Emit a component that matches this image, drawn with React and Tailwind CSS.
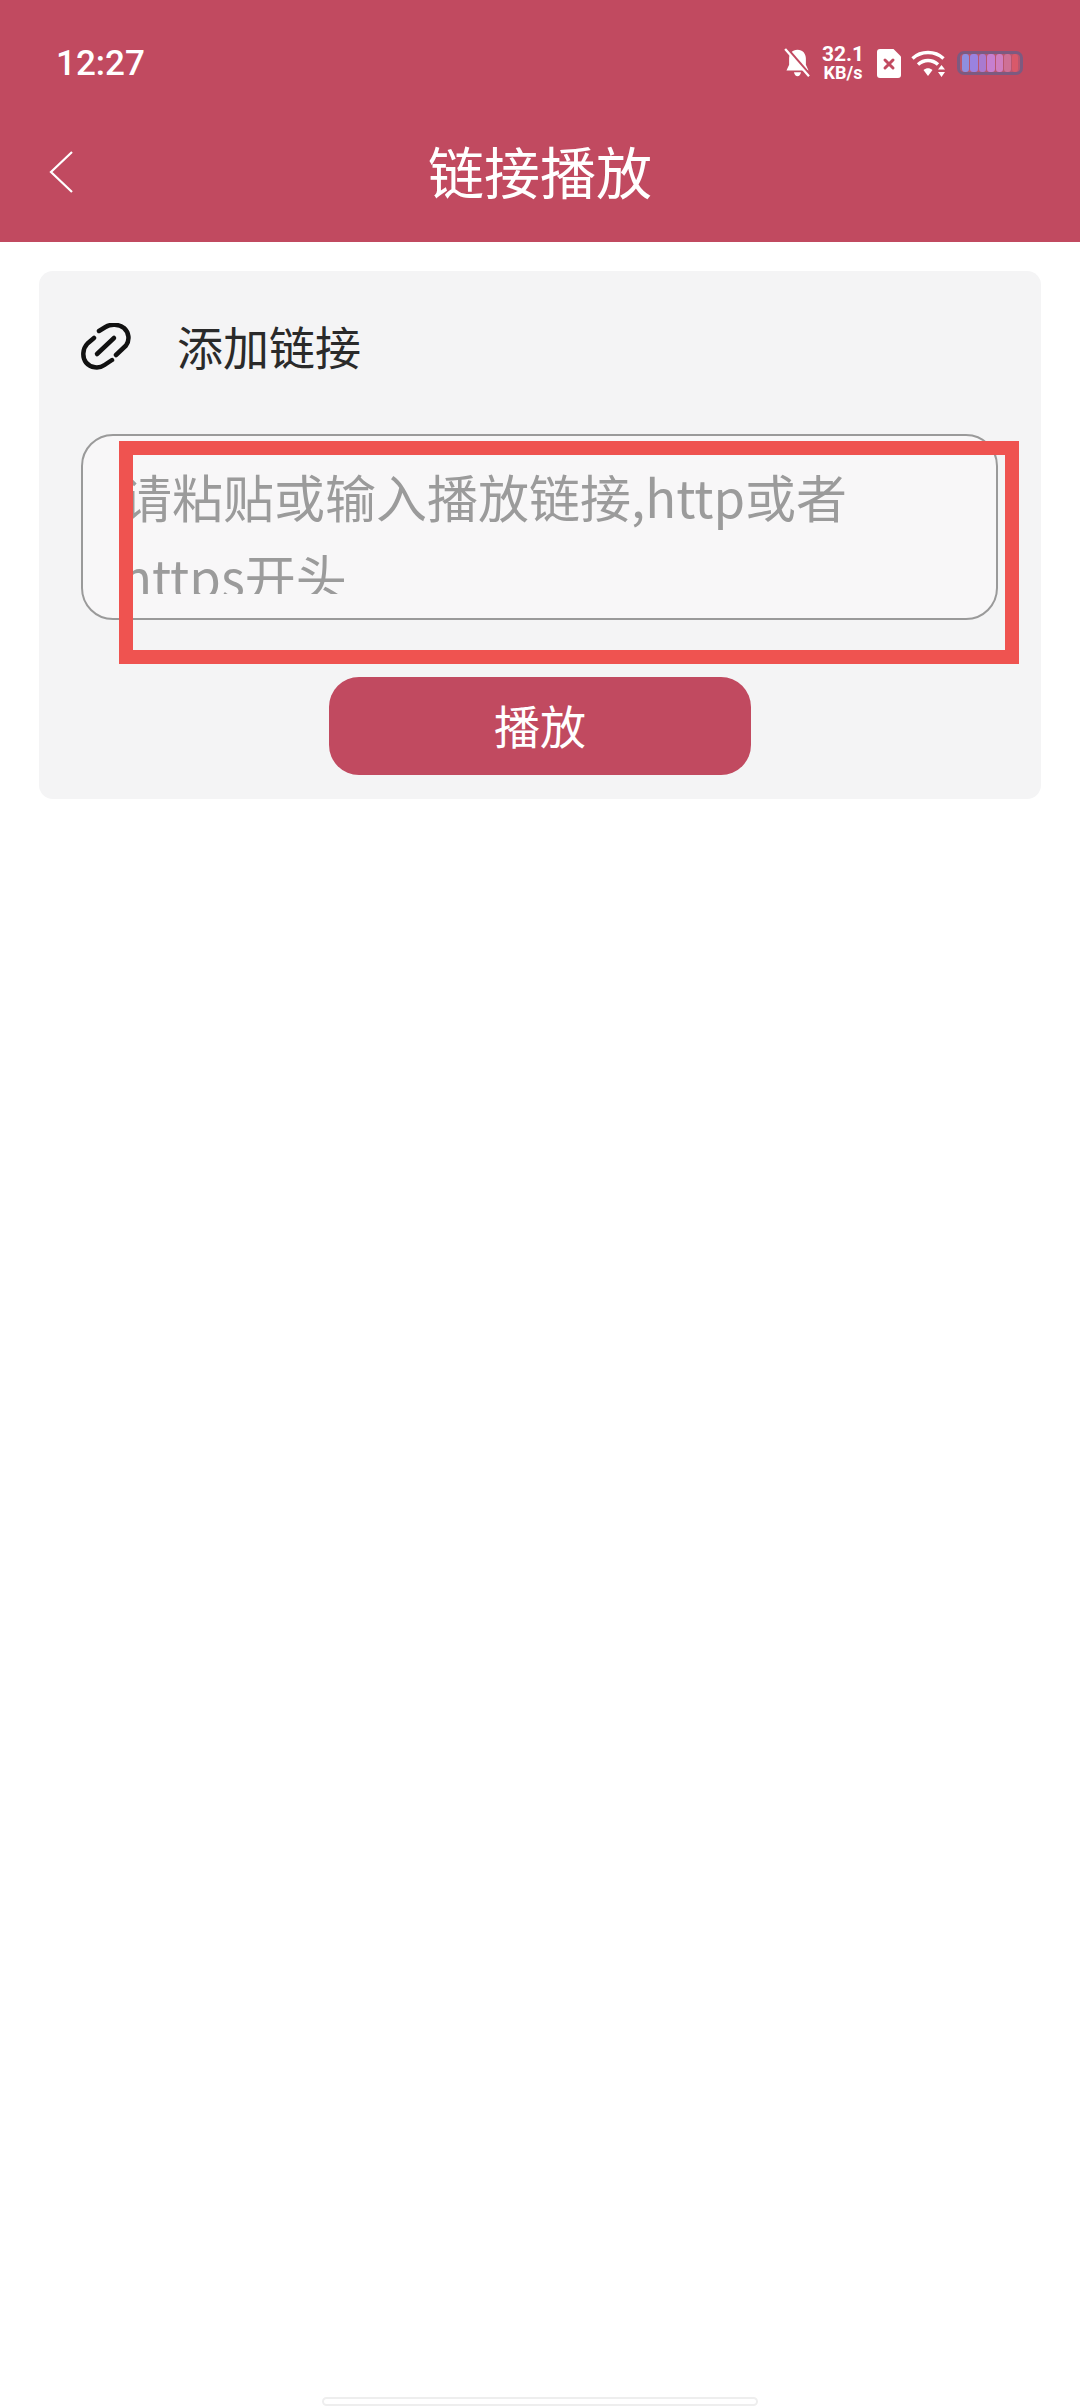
import React from 'react';

const cjk = { fontFamily: '"Noto Sans CJK SC", sans-serif' };

const BellOff = () => (
  <svg width="27" height="30" viewBox="0 0 30 34" className="block">
    <path d="M15 2c-6 0-9.500 4.500-9.500 10v7L2.500 25.500h25L24.500 19v-7C24.500 6.500 21 2 15 2z" fill="#fff" />
    <path d="M11 27.500c.7 2.800 2 4.500 4 4.500s3.300-1.700 4-4.500z" fill="#fff" />
    <path d="M3 1l26 30" stroke="#c14a60" strokeWidth="4" />
    <path d="M1 1l27 31" stroke="#fff" strokeWidth="2.600" />
  </svg>
);

const SimX = () => (
  <svg width="24" height="29" viewBox="0 0 24 29" className="block">
    <path d="M3 0h13.500L24 7.500V26a3 3 0 0 1-3 3H3a3 3 0 0 1-3-3V3a3 3 0 0 1 3-3z" fill="#fff" />
    <path d="M8 11l8 8M16 11l-8 8" stroke="#c14a60" strokeWidth="3" strokeLinecap="round" />
  </svg>
);

const Wifi = () => (
  <svg width="36" height="28" viewBox="0 0 36 28" className="block">
    <path d="M1.500 9.500C10 1.500 24 1.500 32.500 9.500" stroke="#fff" strokeWidth="3.400" fill="none" />
    <path d="M7 15.500c6-5.300 14-5.300 20 0" stroke="#fff" strokeWidth="3.400" fill="none" />
    <path d="M12.500 21c3-2.500 6-2.500 9 0L17 27z" fill="#fff" />
    <path d="M30.500 16l3.500 4.500h-7zM30.500 28l-3.500-5h7z" fill="#fff" />
  </svg>
);

const Battery = () => (
  <div className="flex h-[24px] w-[66px] items-center gap-[1px] rounded-[7px] border-[3px] border-[#7d5a80] bg-[#b9566f] px-[2px] blur-[0.7px]">
    <span className="h-full w-[8px] rounded-[3px] bg-[#8f8fe0]" />
    <span className="h-full w-[8px] rounded-[3px] bg-[#9a82e0]" />
    <span className="h-full w-[8px] rounded-[3px] bg-[#a97ad0]" />
    <span className="h-full w-[8px] rounded-[3px] bg-[#c67fd0]" />
    <span className="h-full w-[8px] rounded-[3px] bg-[#cf7ec0]" />
    <span className="h-full w-[8px] rounded-[3px] bg-[#cf7095]" />
    <span className="h-full w-[6px] rounded-[3px] bg-[#d9596a]" />
  </div>
);

const LinkIcon = () => (
  <svg width="50" height="47" viewBox="0 0 50 47" className="mt-[4px] block" fill="none" stroke="#111" strokeWidth="4.500" strokeLinecap="round" strokeLinejoin="round">
    <path d="M13 15L6.500 20.500C1.500 25.500 1 34.500 5 39.500 9.500 45 18 46 23.500 42L31 37" />
    <path d="M18 8L24.500 4C29.500 .8 38 1 43 5 48 9.500 49 17 45 22.500L35 32" />
    <path d="M16 31l17-16" />
  </svg>
);

export default function App() {
  return (
    <div className="flex h-[2408px] w-[1080px] flex-col overflow-hidden bg-white" style={cjk}>
      <header className="flex h-[242px] flex-col bg-[#c14a60] text-white">
        <div className="flex h-[126px] items-center justify-between pl-[56px] pr-[57px]">
          <span className="text-[35px] font-medium leading-none" style={{ fontFamily: 'Roboto, sans-serif' }}>12:27</span>
          <div className="flex items-center">
            <BellOff />
            <div className="ml-[11px] flex w-[42px] flex-col items-center text-[18px] font-bold leading-[18px]" style={{ fontFamily: 'Roboto, sans-serif' }}>
              <span className="text-[21px] leading-[20px]">32.1</span>
              <span>KB/s</span>
            </div>
            <div className="ml-[13px]"><SimX /></div>
            <div className="ml-[10px]"><Wifi /></div>
            <div className="ml-[10px]"><Battery /></div>
          </div>
        </div>
        <div className="relative flex h-[96px] items-center justify-center pb-[8px]">
          <svg width="24" height="42" viewBox="0 0 24 42" className="absolute left-[49px] top-[25px]" fill="none" stroke="#fff" strokeWidth="2.200">
            <path d="M23 1L2 21l21 20" />
          </svg>
          <h1 className="text-[56px] font-normal leading-none">链接播放</h1>
        </div>
      </header>

      <section className="mx-[39px] mt-[29px] flex h-[528px] flex-col rounded-[14px] bg-[#f4f4f5] px-[42px]">
        <div className="flex h-[163px] items-center pb-[16px]">
          <LinkIcon />
          <span className="ml-[46px] text-[46px] leading-none text-[#2a2a2a]">添加链接</span>
        </div>
        <div className="relative h-[186px] w-[917px] rounded-[32px] border-2 border-[#9a9a9a] bg-[#f8f7f8]">
          <div className="ml-[38px] mt-[20px] h-[138px] w-[730px] overflow-hidden text-[51px] leading-[80px] text-[#9b9b9b]">
            请粘贴或输入播放链接,http或者https开头
          </div>
          <div className="absolute left-[36px] top-[5px] h-[223px] w-[900px] border-[14px] border-[#ef5350]" />
        </div>
        <button className="mx-auto mt-[57px] h-[98px] w-[422px] rounded-[30px] bg-[#c14a60] pb-[5px] text-[46px] leading-none text-white">
          播放
        </button>
      </section>

      <div className="mx-auto mb-[2px] mt-auto h-[9px] w-[436px] rounded-full border-2 border-[#eeeeee] bg-white" />
    </div>
  );
}
